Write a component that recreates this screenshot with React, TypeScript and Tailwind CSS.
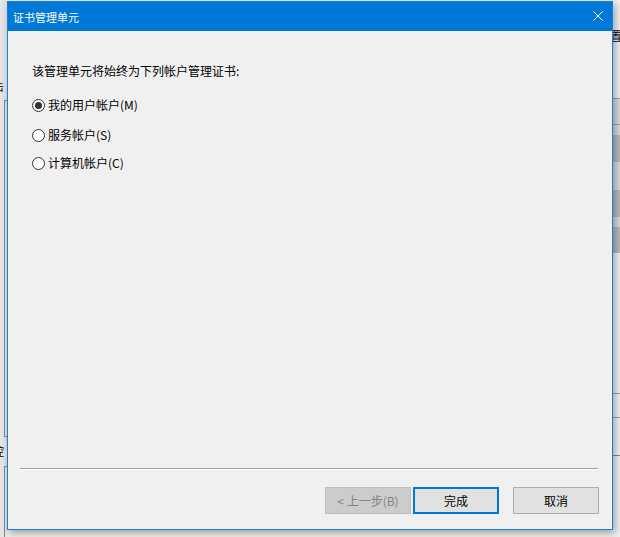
import React from "react";

const font = "font-['Noto_Sans_CJK_SC','Noto_Sans',sans-serif]";

const Radio = ({ label, checked }: { label: string; checked?: boolean }) => (
    <label className="flex items-center gap-[3px] h-[16px] leading-[16px]">
        <span className="w-[13px] h-[13px] rounded-full border border-[#333333] bg-white flex items-center justify-center">
            {checked && <span className="w-[7px] h-[7px] rounded-full bg-[#333333]" />}
        </span>
        <span>{label}</span>
    </label>
);

export default function App() {
    return (
        <div className={`relative w-[620px] h-[537px] overflow-hidden bg-[#f0f0f0] text-[12px] text-black ${font}`}>
            {/* window behind the dialog */}
            <div className="flex h-full">
                <div className="w-[7px] flex flex-col bg-[#e6e6e6] overflow-hidden">
                    <div className="h-[80px]" />
                    <span className="ml-[-7px] leading-[12px] text-[11px]">击</span>
                    <div className="h-[8px]" />
                    <div className="ml-[4px] h-[337px] border-l border-t border-b border-[#8a8a8a]" />
                    <div className="h-[8px]" />
                    <span className="ml-[-7px] leading-[12px] text-[11px]">控</span>
                    <div className="h-[9px]" />
                    <div className="ml-[4px] flex-1 border-l border-t border-[#8a8a8a]" />
                </div>
                <div className="flex-1" />
                <div className="w-[7px] flex flex-col bg-[#f0f0f0] overflow-hidden">
                    <div className="h-[29px]" />
                    <span className="ml-[-3px] leading-[13px] text-[12px]">置</span>
                    <div className="h-[56px]" />
                    <div className="h-[27px] border-t border-b border-[#a0a0a0] bg-[#d9d9d9]" />
                    <div className="h-[10px] bg-[#d9d9d9]" />
                    <div className="h-[27px] bg-[#b8b8b8]" />
                    <div className="h-[28px] bg-[#d9d9d9]" />
                    <div className="h-[27px] bg-[#b8b8b8]" />
                    <div className="h-[10px] bg-[#d9d9d9]" />
                    <div className="h-[26px] bg-[#b8b8b8]" />
                    <div className="h-[140px] bg-[#f0f0f0]" />
                    <div className="h-[25px] border-t border-b border-[#a0a0a0]" />
                    <div className="h-[38px] border-b border-[#8a8a8a]" />
                </div>
            </div>

            {/* dialog */}
            <div className="absolute left-[7px] top-[1px] w-[606px] h-[529px] flex flex-col border border-[#1a7fd6] bg-[#f0f0f0] shadow-[2px_3px_8px_rgba(0,0,0,0.35)]">
                <div className="h-[29px] shrink-0 bg-[#0078d7] flex items-center justify-between pl-[5px] pr-[9px] text-white">
                    <span className="text-[11px] leading-[14px]">证书管理单元</span>
                    <svg width="10" height="10" viewBox="0 0 10 10" className="mt-[-1px]">
                        <path d="M0.5 0.5 L9.5 9.5 M9.5 0.5 L0.5 9.5" stroke="white" strokeWidth="1" />
                    </svg>
                </div>

                <div className="flex-1 flex flex-col pl-[24px] pt-[32px]">
                    <p className="leading-[16px]">该管理单元将始终为下列帐户管理证书:</p>
                    <div className="mt-[18px]">
                        <Radio label="我的用户帐户(M)" checked />
                    </div>
                    <div className="mt-[14px]">
                        <Radio label="服务帐户(S)" />
                    </div>
                    <div className="mt-[12px]">
                        <Radio label="计算机帐户(C)" />
                    </div>
                </div>

                <div className="ml-[12px] mr-[14px] border-t border-[#a0a0a0] border-b border-b-white" />

                <div className="flex justify-end pt-[17px] pb-[15px] pr-[13px]">
                    <button className="w-[86px] h-[27px] border border-[#bfbfbf] bg-[#cccccc] text-[#838383]">
                        &lt; 上一步(B)
                    </button>
                    <button className="ml-[2px] w-[86px] h-[27px] border-2 border-[#0078d7] bg-[#e1e1e1]">
                        完成
                    </button>
                    <button className="ml-[14px] w-[86px] h-[27px] border border-[#adadad] bg-[#e1e1e1]">
                        取消
                    </button>
                </div>
            </div>
        </div>
    );
}
